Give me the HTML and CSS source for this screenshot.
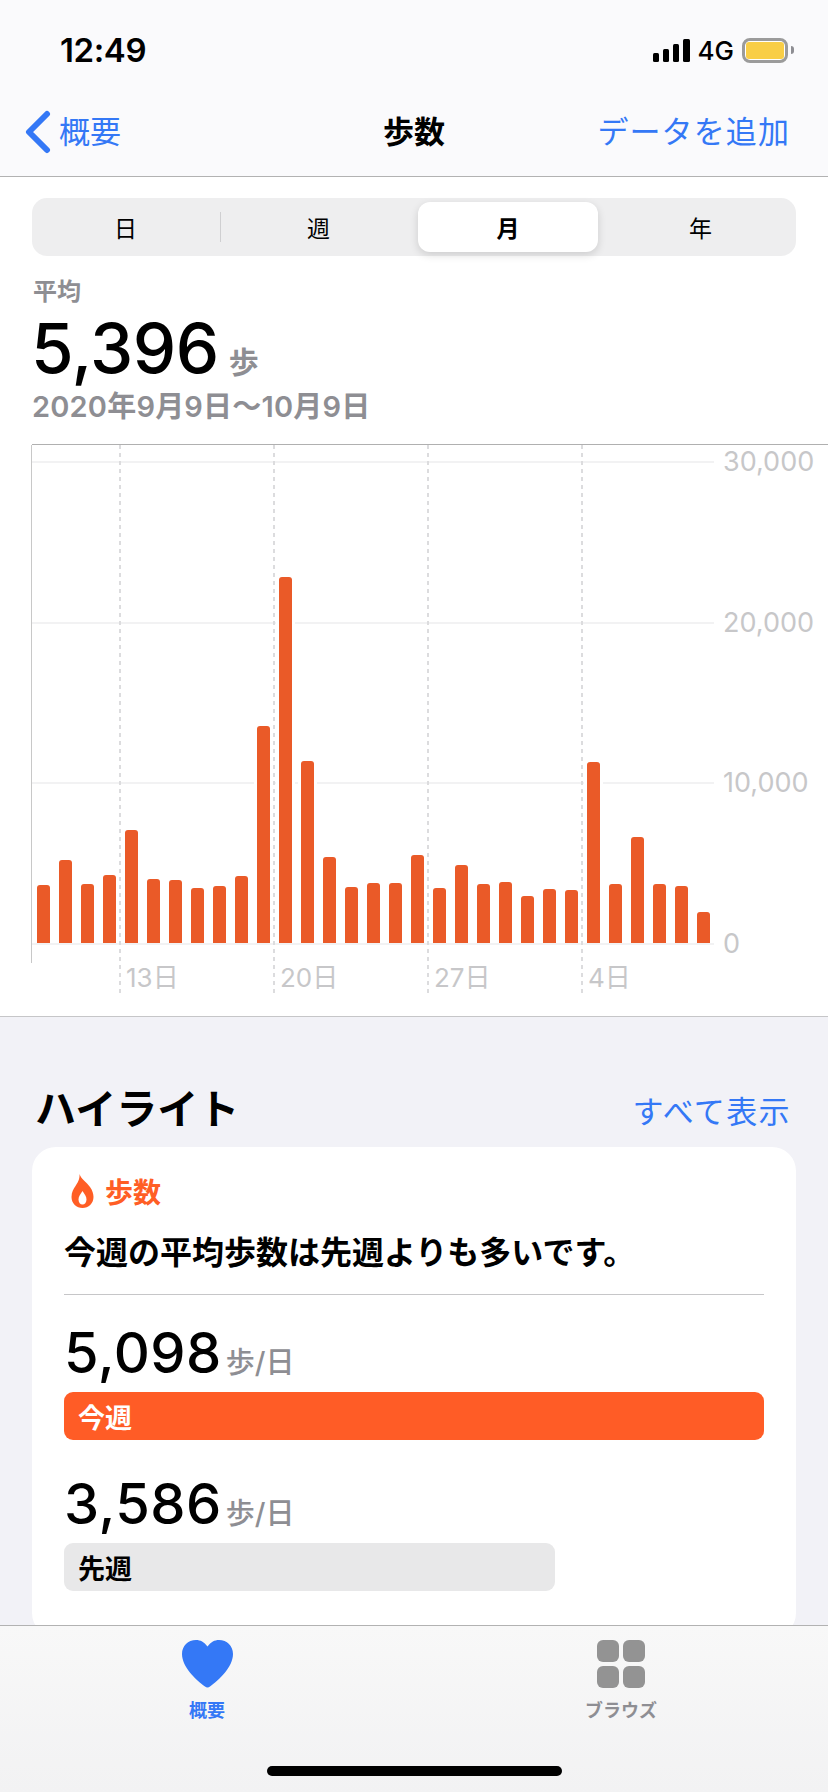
FILE: index.html
```html
<!DOCTYPE html>
<html lang="ja">
<head>
<meta charset="utf-8">
<title>歩数</title>
<link rel="stylesheet" href="styles.css">
</head>
<body>
<div class="phone">
  <header class="top">
    <div class="status">
      <span class="time">12:49</span>
      <div class="status-right">
        <div class="signal"><i class="s1"></i><i class="s2"></i><i class="s3"></i><i class="s4"></i></div>
        <span class="net">4G</span>
        <div class="battery"><div class="battery-fill"></div></div>
        <div class="battery-nub"></div>
      </div>
    </div>
    <nav class="nav">
      <a class="back">
        <svg class="chevron" width="28" height="44" viewBox="0 0 28 44"><path d="M23 4 L5 22 L23 40" fill="none" stroke="#3478f6" stroke-width="6" stroke-linecap="round" stroke-linejoin="round"/></svg>
        <span>概要</span>
      </a>
      <h1 class="title">歩数</h1>
      <a class="add">データを追加</a>
    </nav>
  </header>

  <section class="summary">
    <div class="seg">
      <div class="seg-item seg-first">日</div>
      <div class="seg-item">週</div>
      <div class="seg-item seg-on">月</div>
      <div class="seg-item">年</div>
    </div>
    <div class="stat-label">平均</div>
    <div class="stat-line"><span class="stat-num">5,396</span><span class="stat-unit">歩</span></div>
    <div class="stat-date">2020年9月9日〜10月9日</div>

    <div class="chart">
      <div class="axis-left"></div>
      <div class="grid">
        <div class="grid-row"><span class="grid-label">30,000</span></div>
        <div class="grid-row"><span class="grid-label">20,000</span></div>
        <div class="grid-row"><span class="grid-label">10,000</span></div>
        <div class="grid-row"><span class="grid-label">0</span></div>
      </div>
      <div class="days">
        <div class="day">13日</div>
        <div class="day">20日</div>
        <div class="day">27日</div>
        <div class="day">4日</div>
      </div>
      <div class="bars">
        <i class="bar" style="height:58px"></i><i class="bar" style="height:83px"></i><i class="bar" style="height:59px"></i><i class="bar" style="height:68px"></i><i class="bar" style="height:113px"></i><i class="bar" style="height:64px"></i><i class="bar" style="height:63px"></i><i class="bar" style="height:55px"></i><i class="bar" style="height:57px"></i><i class="bar" style="height:67px"></i><i class="bar" style="height:217px"></i><i class="bar" style="height:366px"></i><i class="bar" style="height:182px"></i><i class="bar" style="height:86px"></i><i class="bar" style="height:56px"></i><i class="bar" style="height:60px"></i><i class="bar" style="height:60px"></i><i class="bar" style="height:88px"></i><i class="bar" style="height:55px"></i><i class="bar" style="height:78px"></i><i class="bar" style="height:59px"></i><i class="bar" style="height:61px"></i><i class="bar" style="height:47px"></i><i class="bar" style="height:54px"></i><i class="bar" style="height:53px"></i><i class="bar" style="height:181px"></i><i class="bar" style="height:59px"></i><i class="bar" style="height:106px"></i><i class="bar" style="height:59px"></i><i class="bar" style="height:57px"></i><i class="bar" style="height:31px"></i>
      </div>
    </div>
  </section>

  <section class="highlights">
    <div class="hl-head">
      <h2 class="hl-title">ハイライト</h2>
      <a class="hl-all">すべて表示</a>
    </div>
    <article class="card">
      <div class="card-tag">
        <svg class="flame" width="23" height="34" viewBox="0 0 22 34"><path fill="#ff5e25" fill-rule="evenodd" d="M8 0 C9.5 5 15 8 18.5 13 C21 16.5 22 20 22 23 C22 29.5 17 34 11 34 C5 34 0 29.5 0 23 C0 18 2 15 4 12 C6 9 8.5 5 8 0Z M11 17 C9 20 7 22.5 7 25.5 C7 28.5 8.8 30.5 11 30.5 C13.2 30.5 15 28.5 15 25.5 C15 22.5 13 20 11 17Z"/></svg>
        <span>歩数</span>
      </div>
      <p class="card-text">今週の平均歩数は先週よりも多いです。</p>
      <div class="rule"></div>
      <div class="metric"><span class="metric-num">5,098</span><span class="metric-unit">歩/日</span></div>
      <div class="pill pill-now">今週</div>
      <div class="metric metric-last"><span class="metric-num">3,586</span><span class="metric-unit">歩/日</span></div>
      <div class="pill pill-prev">先週</div>
    </article>
  </section>

  <footer class="tabbar">
    <div class="tabs">
      <div class="tab tab-on">
        <svg width="51" height="48" viewBox="0 0 51 48"><path fill="#3478f6" d="M25.5 6.5 C22 2 18.5 0 14 0 C6 0 0 6 0 14 C0 27 14 40 23 46.5 C24.5 47.7 26.5 47.7 28 46.5 C37 40 51 27 51 14 C51 6 45 0 37 0 C32.5 0 29 2 25.5 6.5Z"/></svg>
        <span>概要</span>
      </div>
      <div class="tab">
        <div class="browse"><i></i><i></i><i></i><i></i></div>
        <span>ブラウズ</span>
      </div>
    </div>
    <div class="home"></div>
  </footer>
</div>
</body>
</html>
```
FILE: styles.css
```css
* { box-sizing: border-box; }
html, body { margin: 0; padding: 0; }
body {
  width: 828px;
  height: 1792px;
  overflow: hidden;
  background: #f2f2f7;
  font-family: Inter, "Noto Sans CJK JP", sans-serif;
  color: #000;
}
h1, h2, p { margin: 0; font: inherit; }
.phone { position: relative; width: 828px; height: 1792px; overflow: hidden; }

/* header */
.top { height: 177px; background: #fafafc; border-bottom: 1px solid #b2b2b2; }
.status { height: 100px; display: flex; justify-content: space-between; align-items: center; padding: 0 34px 0 60px; }
.time { font-size: 33px; font-weight: 600; letter-spacing: -0.4px; }
.status-right { display: flex; align-items: center; }
.signal { display: flex; align-items: flex-end; gap: 4px; height: 23px; margin-right: 8px; }
.signal i { width: 6px; background: #000; border-radius: 1.5px; display: block; }
.signal .s1 { height: 9px; }
.signal .s2 { height: 13px; }
.signal .s3 { height: 18px; }
.signal .s4 { height: 23px; width: 7px; }
.net { font-size: 26px; font-weight: 500; margin-right: 8px; }
.battery { width: 46px; height: 25px; border: 3px solid #9b9b9b; border-radius: 8px; padding: 1px; background: #fff; }
.battery-fill { width: 100%; height: 100%; background: #f9ce46; border-radius: 3px; }
.battery-nub { width: 3px; height: 8px; background: #8e8e93; margin-left: 3px; border-radius: 0 4px 4px 0; }

.nav { height: 76px; display: grid; grid-template-columns: 1fr auto 1fr; align-items: center; padding: 0 24px 18px 24px; font-size: 31px; color: #3478f6; }
.back { display: flex; align-items: center; gap: 7px; }
.chevron { display: block; margin-top: 6px; }
.title { color: #000; font-weight: 700; }
.add { justify-self: end; white-space: nowrap; margin-right: 14px; letter-spacing: 1.1px; }

/* summary */
.summary { height: 840px; background: #fff; border-bottom: 1px solid #c6c6c8; padding-top: 21px; }
.seg { margin: 0 32px; width: 764px; height: 58px; background: #eeeeef; border-radius: 15px; display: grid; grid-template-columns: repeat(4, 1fr); font-size: 23px; }
.seg-item { display: flex; align-items: center; justify-content: center; }
.seg-first { position: relative; padding-right: 4px; }
.seg-first::after { content: ""; position: absolute; right: 2px; top: 14px; height: 30px; width: 1px; background: #cfcfd1; }
.seg-on { margin: 4px 7px 4px 4px; background: #fff; border-radius: 12px; font-weight: 700; box-shadow: 0 3px 8px rgba(0,0,0,0.14); }

.stat-label { margin: 20px 0 0 33px; font-size: 24px; line-height: 32px; font-weight: 700; color: #8e8e93; }
.stat-line { margin: 6px 0 0 31px; height: 68px; display: flex; align-items: baseline; line-height: 68px; }
.stat-num { font-size: 69px; font-weight: 500; letter-spacing: -0.5px; }
.stat-unit { margin-left: 10px; font-size: 30px; font-weight: 700; color: #8e8e93; }
.stat-date { margin: 5px 0 0 32px; font-size: 29px; line-height: 40px; font-weight: 600; color: #8e8e93; white-space: nowrap; letter-spacing: 0.2px; }

/* chart */
.chart { position: relative; margin: 17px 0 0 32px; height: 549px; border-top: 1px solid #b0b0b0; }
.axis-left { position: absolute; left: -1px; top: 0; height: 518px; width: 1px; background: #c8c8c8; }
.grid { position: absolute; left: 0; top: 16px; width: 682px; height: 484px; display: flex; flex-direction: column; justify-content: space-between; }
.grid-row { position: relative; height: 2px; background: #f2f2f3; }
.grid-label { position: absolute; left: 691px; top: -15px; font-size: 27px; line-height: 32px; color: #c7c7c9; white-space: nowrap; }
.days { position: absolute; left: 87px; top: 0; height: 548px; display: flex; }
.day {
  width: 154px;
  padding: 517px 0 0 7px;
  font-size: 26px;
  line-height: 32px;
  color: #c7c7c9;
  white-space: nowrap;
  background: repeating-linear-gradient(to bottom, #dcdcde 0 4px, transparent 4px 8px) left top / 2px 100% no-repeat;
}
.bars { position: absolute; left: 4.5px; top: 0; height: 498px; display: flex; align-items: flex-end; gap: 9px; }
.bar { display: block; width: 13px; background: #ea5a28; border-radius: 3px 3px 0 0; box-shadow: -3px 0 0 #fff, 3px 0 0 #fff; }

/* highlights */
.highlights { padding: 0 32px; }
.hl-head { height: 130px; display: flex; justify-content: space-between; align-items: flex-end; padding: 0 5px 10px 3px; }
.hl-title { font-size: 41px; line-height: 56px; font-weight: 700; }
.hl-all { font-size: 31px; line-height: 50px; color: #3478f6; letter-spacing: 1.4px; }
.card { height: 490px; background: #fff; border-radius: 24px; padding: 27px 32px 0; }
.card-tag { display: flex; align-items: center; gap: 11px; height: 34px; padding-left: 7px; font-size: 28px; font-weight: 700; color: #ff5e25; }
.flame { display: block; }
.card-text { margin-top: 23px; font-size: 32px; line-height: 44px; font-weight: 700; white-space: nowrap; }
.rule { margin-top: 19px; height: 1px; background: #c6c6c8; }
.metric { margin-top: 20px; height: 77px; display: flex; align-items: baseline; line-height: 76px; }
.metric-last { margin-top: 26px; }
.metric-num { font-size: 56px; font-weight: 500; letter-spacing: 0.5px; }
.metric-unit { margin-left: 4px; font-size: 29px; font-weight: 500; color: #8e8e93; }
.pill { height: 48px; border-radius: 9px; padding-left: 14px; display: flex; align-items: center; font-size: 27px; font-weight: 700; }
.pill-now { background: #ff5c26; color: #fff; }
.pill-prev { width: 491px; background: #e8e8e9; color: #000; }

/* tab bar */
.tabbar { position: absolute; left: 0; right: 0; top: 1625px; height: 167px; background: linear-gradient(#f8f8f8, #f2f2f3); border-top: 1px solid #b2b2b2; }
.tabs { display: grid; grid-template-columns: 1fr 1fr; padding-top: 14px; }
.tab { display: flex; flex-direction: column; align-items: center; gap: 10px; font-size: 18px; line-height: 26px; font-weight: 700; color: #8e8e93; }
.tab svg { display: block; }
.tab-on { color: #3478f6; }
.browse { width: 48px; height: 48px; display: grid; grid-template-columns: 22px 22px; grid-template-rows: 22px 22px; gap: 4px; }
.browse i { display: block; background: #939393; border-radius: 6px; }
.home { position: absolute; left: 267px; top: 140px; width: 295px; height: 10px; background: #000; border-radius: 5px; }
```
